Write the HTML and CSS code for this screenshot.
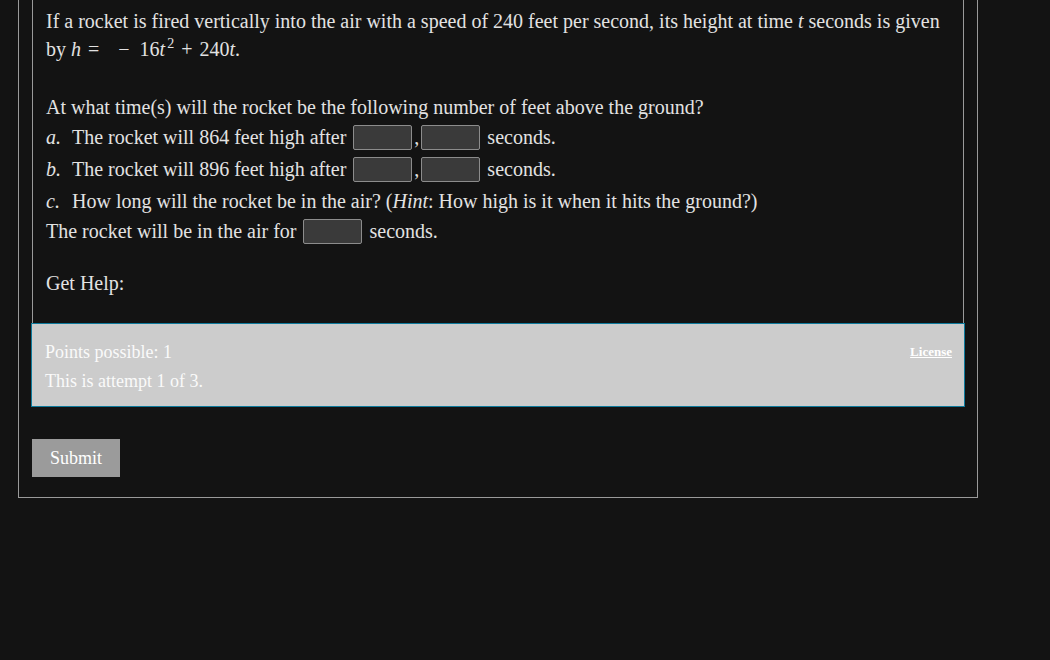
FILE: index.html
```html
<!DOCTYPE html>
<html lang="en">

<head>
    <meta charset="utf-8" />
    <title>Question</title>
    <link rel="stylesheet" href="styles.css">
</head>

<body>
    <div class="wrap">
        <div class="question">
            <p>If a rocket is fired vertically into the air with a speed of 240 feet per second, its height at time <span class="mi">t</span> seconds is given by <span class="math"><span class="mi">h</span><span class="mo">=</span><span class="mo minus">&minus;</span>16<span class="mi">t</span><sup>2</sup><span class="mo">+</span>240<span class="mi">t</span></span>.</p>

            <p class="gap">At what time(s) will the rocket be the following number of feet above the ground?</p>
            <div class="row"><span class="mi lbl">a.</span>The rocket will 864 feet high after <input type="text" class="ans">,<input type="text" class="ans"> seconds.</div>
            <div class="row"><span class="mi lbl">b.</span>The rocket will 896 feet high after <input type="text" class="ans">,<input type="text" class="ans"> seconds.</div>
            <div class="row"><span class="mi lbl">c.</span>How long will the rocket be in the air? (<i>Hint</i>: How high is it when it hits the ground?)</div>
            <div class="row">The rocket will be in the air for <input type="text" class="ans"> seconds.</div>

            <p class="help">Get Help:</p>
        </div>
        <div class="info">
            <div>
                <div>Points possible: 1</div>
                <div>This is attempt 1 of 3.</div>
            </div>
            <a href="#" class="license">License</a>
        </div>
        <button type="button" class="submit">Submit</button>
    </div>
</body>

</html>
```

FILE: styles.css
```css
body {
    margin: 0;
    background-color: #131313;
    color: #e2e2e2;
    font-family: 'Liberation Serif', 'Times New Roman', serif;
    font-size: 20px;
    line-height: 28px;
}

.wrap {
    width: 932px;
    margin-left: 18px;
    padding: 0 13px 20px;
    border: 1px solid #9a9a9a;
    border-top: none;
}

.question {
    border-left: 1px solid #9a9a9a;
    border-right: 1px solid #9a9a9a;
    padding: 7px 13px 26px;
}

.question p {
    margin: 0;
}

.question p.gap {
    margin-top: 30px;
}

.question p.help {
    margin-top: 24px;
}

.mi {
    font-style: italic;
}

.mo {
    margin: 0 7px;
}

.mo.minus {
    margin: 0 10px 0 12px;
}

.math sup {
    font-size: 14px;
    vertical-align: 8px;
    line-height: 1;
    margin-left: 2px;
}

.row {
    height: 32px;
    display: flex;
    align-items: center;
    white-space: pre;
}

.row:nth-of-type(4) {
    height: 28px;
}

.lbl {
    width: 26px;
}

.ans {
    width: 59px;
    height: 25px;
    box-sizing: border-box;
    margin: 0 2px;
    padding: 0 4px;
    background-color: #3a3a3a;
    border: 1px solid #8c8c8c;
    border-radius: 2px;
    color: #eee;
}

.info {
    display: flex;
    justify-content: space-between;
    align-items: flex-start;
    height: 68px;
    padding: 14px 12px 0 13px;
    margin-left: -1px;
    margin-right: -1px;
    background-color: #cccccc;
    border: 1px solid #0e7a9c;
    color: #fafafa;
    font-size: 18px;
}

.info > div > div {
    height: 29px;
}

.license {
    color: #fff;
    font-size: 13px;
    font-weight: bold;
}

.submit {
    margin-top: 32px;
    width: 88px;
    height: 38px;
    background-color: #9b9b9b;
    color: #fff;
    border: none;
    font-family: 'Liberation Serif', serif;
    font-size: 18px;
    padding: 0;
}
```
